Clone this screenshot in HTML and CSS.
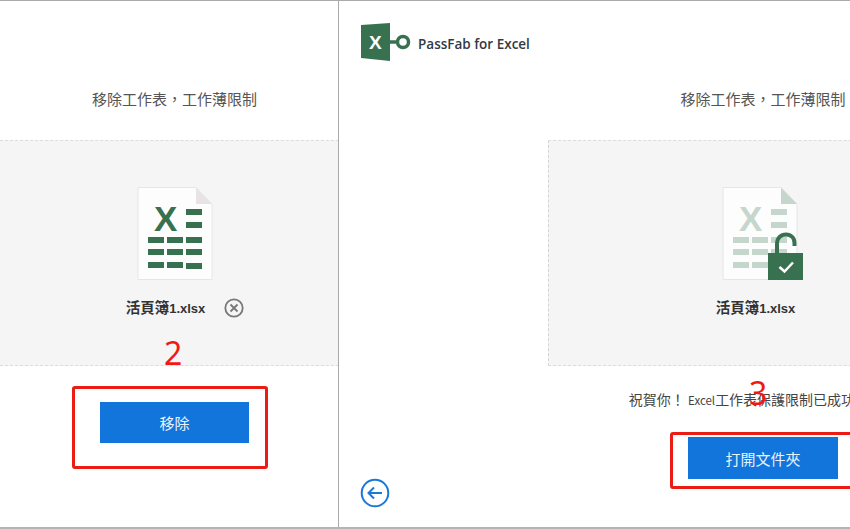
FILE: index.html

```html
<!DOCTYPE html>
<html lang="zh-Hant">
<head>
    <meta charset="UTF-8">
    <meta name="viewport" content="width=device-width, initial-scale=1.0">
    <title>PassFab for Excel</title>
    <link rel="stylesheet" href="styles.css">
</head>
<body>
    <div class="shots">
        <section class="pane pane-left">
            <div class="pane-inner pane-inner-left">
                <div class="brand"></div>
                <p class="title">移除工作表&#xFF0C;工作薄限制</p>
                <div class="zone">
                    <svg class="file-icon" width="76" height="94" viewBox="0 0 76 94">
                        <path class="sheet" d="M1 .5H59L75 17V92.500H1Z"/>
                        <path class="fold" d="M59 .5L75 17H59Z"/>
                        <g class="cells">
                            <text class="sheet-x" x="17" y="44">X</text>
                            <rect x="49" y="22" width="16" height="6"/>
                            <rect x="49" y="35" width="16" height="6"/>
                            <rect x="11" y="50" width="16" height="6"/>
                            <rect x="30" y="50" width="16" height="6"/>
                            <rect x="49" y="50" width="16" height="6"/>
                            <rect x="11" y="62" width="16" height="6"/>
                            <rect x="30" y="62" width="16" height="6"/>
                            <rect x="49" y="62" width="16" height="6"/>
                            <rect x="11" y="75" width="16" height="6"/>
                            <rect x="30" y="75" width="16" height="6"/>
                            <rect x="49" y="76" width="16" height="6"/>
                        </g>
                    </svg>
                    <div class="file-row file-row-remove">
                        <span class="file-name">活頁簿<span class="file-ext">1.xlsx</span></span>
                        <svg class="close-icon" width="20" height="20" viewBox="0 0 20 20">
                            <circle cx="10" cy="10" r="8.700"/>
                            <path d="M6.500 6.500L13.500 13.500M13.500 6.500L6.500 13.500"/>
                        </svg>
                    </div>
                </div>
                <div class="actions actions-left">
                    <button class="btn">移除</button>
                </div>
            </div>
        </section>

        <section class="pane pane-right">
            <div class="pane-inner">
                <div class="brand">
                    <svg class="logo" width="50" height="40" viewBox="0 0 50 40">
                        <path class="logo-book" d="M0 3L29 1V39L0 36Z"/>
                        <text class="logo-x" x="8" y="27">X</text>
                        <path class="logo-key" d="M29 20H37"/>
                        <circle class="logo-key" cx="42" cy="20" r="5.500"/>
                    </svg>
                    <span class="brand-name">PassFab for Excel</span>
                </div>
                <p class="title">移除工作表&#xFF0C;工作薄限制</p>
                <div class="zone zone-done">
                    <svg class="file-icon" width="82" height="94" viewBox="0 0 82 94">
                        <path class="sheet" d="M1 .5H59L75 17V92.500H1Z"/>
                        <path class="fold fold-done" d="M59 .5L75 17H59Z"/>
                        <g class="cells cells-done">
                            <text class="sheet-x" x="17" y="44">X</text>
                            <rect x="49" y="22" width="16" height="6"/>
                            <rect x="49" y="35" width="16" height="6"/>
                            <rect x="11" y="50" width="16" height="6"/>
                            <rect x="30" y="50" width="16" height="6"/>
                            <rect x="49" y="50" width="16" height="6"/>
                            <rect x="11" y="62" width="16" height="6"/>
                            <rect x="30" y="62" width="16" height="6"/>
                            <rect x="49" y="62" width="16" height="6"/>
                            <rect x="11" y="75" width="16" height="6"/>
                            <rect x="30" y="75" width="16" height="6"/>
                        </g>
                        <path class="shackle" d="M55 68V57C55 51 59 47.500 64 47.500C69 47.500 72.500 51 72.500 56V59"/>
                        <rect class="lock" x="46" y="66" width="35" height="27"/>
                        <path class="tick" d="M57.500 80L62.500 84.500L71 75.500"/>
                    </svg>
                    <div class="file-row file-row-done">
                        <span class="file-name">活頁簿<span class="file-ext">1.xlsx</span></span>
                    </div>
                </div>
                <div class="actions actions-right">
                    <p class="message">祝賀你&#xFF01; <span class="message-en">Excel</span>工作表保護限制已成功移除&#xFF01;</p>
                    <button class="btn">打開文件夾</button>
                </div>
                <svg class="back-icon" width="30" height="30" viewBox="0 0 30 30">
                    <circle cx="15" cy="15" r="13.300"/>
                    <path d="M22 15H9M14 9.500L8.500 15L14 20.500"/>
                </svg>
            </div>
        </section>

        <!-- red notes drawn on top of the screenshot -->
        <span class="note-num note-two">2</span>
        <span class="note-num note-three">3</span>
        <div class="note-box note-box-left"></div>
        <div class="note-box note-box-right"></div>
    </div>
</body>
</html>
```

FILE: styles.css

```css
* {
    box-sizing: border-box;
}

body {
    margin: 0;
    background: white;
    font-family: "Noto Sans CJK TC", "Noto Sans", sans-serif;
    color: #444;
    overflow: hidden;
}

.shots {
    position: relative;
    display: flex;
    width: 850px;
    height: 529px;
    border-top: 1px solid #aaa;
    border-bottom: 2px solid #b4b4b4;
    overflow: hidden;
}

.pane {
    height: 100%;
    overflow: hidden;
}

.pane-left {
    width: 339px;
    flex-shrink: 0;
    border-right: 1px solid #aaa;
}

.pane-right {
    flex: 1;
}

.pane-inner {
    position: relative;
    width: 848px;
    height: 100%;
}

.pane-inner-left {
    width: 349px;
}

.brand {
    display: flex;
    align-items: flex-start;
    gap: 7px;
    height: 88px;
    padding: 21px 0 0 22px;
}

.brand-name {
    margin-top: 12px;
    font-family: "Open Sans", sans-serif;
    font-size: 13.500px;
    line-height: 20px;
    font-weight: 600;
    color: #333a45;
}

.logo-book {
    fill: #387150;
}

.logo-x {
    font-family: "Liberation Sans", sans-serif;
    font-size: 19px;
    font-weight: bold;
    fill: white;
}

.logo-key {
    fill: none;
    stroke: #387150;
    stroke-width: 3.500;
}

.title {
    margin: 0 0 31px;
    font-size: 15px;
    line-height: 20px;
    text-align: center;
    color: #555;
}

.zone {
    display: flex;
    flex-direction: column;
    align-items: center;
    height: 226px;
    padding-top: 46px;
    background: #f5f5f5;
    border-top: 1px dashed #dcdcdc;
    border-bottom: 1px dashed #dcdcdc;
}

.zone-done {
    width: 424px;
    margin-left: 209px;
    border-left: 1px dashed #d4d4d4;
}

.file-icon {
    display: block;
}

.zone-done .file-icon {
    margin-left: 5px;
}

.sheet {
    fill: #fdfdfd;
    stroke: #e6e6e6;
}

.fold {
    fill: #e9e3e6;
}

.fold-done {
    fill: #c5d6cd;
}

.cells {
    fill: #387150;
}

.cells-done {
    fill: #c5d6cd;
}

.sheet-x {
    font-family: "Liberation Sans", sans-serif;
    font-size: 35px;
    font-weight: bold;
}

.shackle {
    fill: none;
    stroke: #387150;
    stroke-width: 4;
}

.lock {
    fill: #387150;
}

.tick {
    fill: none;
    stroke: white;
    stroke-width: 2.500;
}

.file-row {
    display: flex;
    align-items: center;
    height: 20px;
    margin-top: 17px;
}

.file-row-remove {
    gap: 19px;
    padding-left: 21px;
}

.file-row-done {
    padding-right: 10px;
}

.file-name {
    font-size: 14.500px;
    line-height: 20px;
    font-weight: bold;
    color: #333;
}

.file-ext {
    font-family: "Liberation Sans", sans-serif;
    font-size: 13px;
}

.close-icon {
    fill: none;
    stroke: #777;
    stroke-width: 1.800;
}

.actions {
    display: flex;
    flex-direction: column;
    align-items: center;
}

.actions-left {
    padding-top: 36px;
}

.actions-right {
    padding-top: 23px;
}

.message {
    margin: 0 0 27px;
    font-size: 14px;
    line-height: 20px;
    white-space: nowrap;
    color: #444;
}

.message-en {
    font-size: 11.500px;
}

.btn {
    width: 150px;
    height: 41px;
    padding: 0;
    background: #1175dc;
    color: #e8f2fc;
    border: none;
    font-family: inherit;
    font-size: 15px;
}

.actions-left .btn {
    width: 149px;
}

.actions-right .btn {
    height: 42px;
}

.back-icon {
    position: absolute;
    left: 21px;
    bottom: 19px;
    fill: none;
    stroke: #1a78d8;
    stroke-width: 2;
}

.note-num {
    position: absolute;
    font-family: "Noto Sans", sans-serif;
    font-size: 32px;
    line-height: 32px;
    color: #f01a14;
}

.note-two {
    left: 164px;
    top: 336px;
}

.note-three {
    left: 749px;
    top: 376px;
}

.note-box {
    position: absolute;
    border: 3px solid #ea1c14;
    border-radius: 3px;
}

.note-box-left {
    left: 72px;
    top: 385px;
    width: 196px;
    height: 83px;
}

.note-box-right {
    left: 670px;
    top: 431px;
    width: 200px;
    height: 57px;
}
```
